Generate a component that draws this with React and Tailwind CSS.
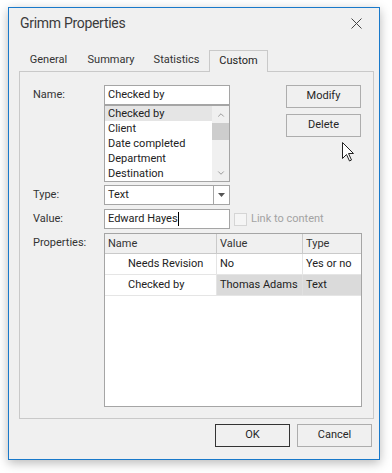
import { ChevronUp, ChevronDown } from "lucide-react";

const items = ["Checked by", "Client", "Date completed", "Department", "Destination"];

function Btn({ children, dark }) {
  return (
    <div
      className={`flex items-center justify-center w-[75px] h-[23px] border bg-[#f0f0f0] text-[#262626] ${
        dark ? "border-[#333333]" : "border-[#adadad]"
      }`}
    >
      {children}
    </div>
  );
}

function Label({ children }) {
  return <div className="w-[71px] h-[20px] leading-[20px] shrink-0 text-[#333]">{children}</div>;
}

export default function App() {
  return (
    <div className="relative w-[392px] h-[473px] bg-white pl-[8px] pt-[7px] font-['Roboto',sans-serif] text-[11px] text-[#222]">
      <div className="flex flex-col w-[372px] h-[453px] border border-[#1979ca] bg-[#f0f0f0] shadow-[0_3px_10px_rgba(0,0,0,0.28)]">
        {/* title bar */}
        <div className="flex items-center justify-between h-[31px] pl-[11px] pr-[17px]">
          <span className="text-[14px] tracking-[-0.3px] text-[#3b3b3b]">Grimm Properties</span>
          <svg width="11" height="11" viewBox="0 0 11 11" className="text-[#444]">
            <path d="M0.5 0.5 L10.5 10.5 M10.5 0.5 L0.5 10.5" stroke="currentColor" strokeWidth="1" />
          </svg>
        </div>

        {/* tabs */}
        <div className="flex mt-[11px] ml-[10px] h-[21px] text-[#333]">
          <div className="w-[59px] flex items-center justify-center">General</div>
          <div className="w-[66px] flex items-center justify-center">Summary</div>
          <div className="w-[65px] flex items-center justify-center">Statistics</div>
          <div className="relative z-10 w-[59px] h-[22px] flex items-center justify-center border border-b-0 border-[#c9c9c9] bg-[#f0f0f0] text-[#222]">
            Custom
          </div>
        </div>

        {/* panel */}
        <div className="ml-[10px] w-[355px] h-[348px] border border-[#c9c9c9] pl-[13px] pt-[13px]">
          <div className="flex items-start">
            <Label>Name:</Label>
            <div className="flex flex-col w-[126px]">
              <div className="h-[20px] border border-[#a5a5a5] bg-white pl-[3px] leading-[18px] text-[#222]">
                Checked by
              </div>
              <div className="flex h-[77px] border border-[#a5a5a5] bg-white">
                <div className="flex-1 flex flex-col">
                  {items.map((it, i) => (
                    <div
                      key={it}
                      className={`h-[15px] leading-[15px] pl-[3px] ${i === 0 ? "bg-[#e5e5e5]" : ""}`}
                    >
                      {it}
                    </div>
                  ))}
                </div>
                <div className="flex flex-col w-[17px] bg-[#f0f0f0]">
                  <div className="h-[17px] flex items-center justify-center text-[#8a8a8a]">
                    <ChevronUp size={10} strokeWidth={2} />
                  </div>
                  <div className="h-[17px] bg-[#cdcdcd]" />
                  <div className="flex-1" />
                  <div className="h-[17px] flex items-center justify-center text-[#8a8a8a]">
                    <ChevronDown size={10} strokeWidth={2} />
                  </div>
                </div>
              </div>
            </div>
            <div className="flex flex-col gap-[6px] ml-[56px]">
              <Btn>Modify</Btn>
              <Btn>Delete</Btn>
            </div>
          </div>

          <div className="flex mt-[3px]">
            <Label>Type:</Label>
            <div className="flex w-[126px] h-[20px] border border-[#a5a5a5] bg-white">
              <div className="flex-1 pl-[3px] leading-[18px]">Text</div>
              <div className="w-[16px] border-l border-[#a5a5a5] flex items-center justify-center">
                <svg width="7" height="4" viewBox="0 0 7 4">
                  <path d="M0 0 H7 L3.5 4 Z" fill="#555" />
                </svg>
              </div>
            </div>
          </div>

          <div className="flex items-center mt-[4px]">
            <Label>Value:</Label>
            <div className="flex items-center w-[126px] h-[20px] border border-[#a5a5a5] bg-white pl-[3px]">
              <span>Edward Hayes</span>
              <span className="w-px h-[14px] bg-black" />
            </div>
            <div className="ml-[4px] w-[13px] h-[13px] border border-[#d5d5d5] bg-[#f5f5f5]" />
            <span className="ml-[4px] text-[#a3a3a3]">Link to content</span>
          </div>

          <div className="flex mt-[4px]">
            <div className="w-[71px] pt-[2px] text-[#333]">Properties:</div>
            <div className="flex flex-col w-[258px] h-[174px] border border-[#a5a5a5] bg-white">
              <div className="flex h-[20px] bg-[#f0f0f0] border-b border-[#cacaca] text-[#333]">
                <div className="w-[112px] pl-[3px] leading-[19px] border-r border-[#cacaca]">Name</div>
                <div className="w-[86px] pl-[3px] leading-[19px] border-r border-[#cacaca]">Value</div>
                <div className="flex-1 pl-[3px] leading-[19px]">Type</div>
              </div>
              <div className="flex h-[21px] border-b border-[#e5e5e5]">
                <div className="w-[112px] pl-[23px] leading-[20px] border-r border-[#e5e5e5]">Needs Revision</div>
                <div className="w-[86px] pl-[3px] leading-[20px] border-r border-[#e5e5e5]">No</div>
                <div className="flex-1 pl-[3px] leading-[20px]">Yes or no</div>
              </div>
              <div className="flex h-[21px] border-b border-[#e5e5e5]">
                <div className="w-[112px] pl-[23px] leading-[20px] border-r border-[#e5e5e5]">Checked by</div>
                <div className="w-[86px] pl-[3px] leading-[20px] bg-[#dadada] border-r border-[#e0e0e0]">Thomas Adams</div>
                <div className="flex-1 pl-[3px] leading-[20px] bg-[#dadada]">Text</div>
              </div>
            </div>
          </div>
        </div>

        {/* footer buttons */}
        <div className="flex justify-end gap-[7px] mt-[5px] pr-[7px]">
          <Btn dark>OK</Btn>
          <Btn>Cancel</Btn>
        </div>
      </div>

      {/* mouse cursor */}
      <svg
        className="absolute left-[342px] top-[142px]"
        width="13"
        height="20"
        viewBox="0 0 13 20"
      >
        <path
          d="M0.5 0.5 L0.5 16.5 L4.5 12.5 L7.5 19 L9.5 18 L6.5 11.5 L11.5 11.5 Z"
          fill="white"
          stroke="#222"
          strokeWidth="1"
          strokeLinejoin="miter"
        />
      </svg>
    </div>
  );
}
